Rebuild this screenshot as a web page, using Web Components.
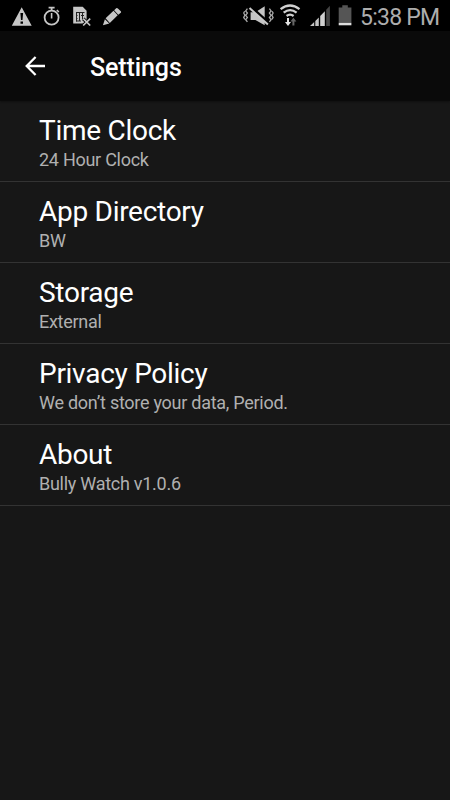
<!DOCTYPE html>
<html lang="en">
<head>
<meta charset="utf-8">
<title>Settings</title>
<style>
  html, body { margin: 0; height: 100%; background: #171717; overflow: hidden; }
  body { font-family: Roboto, "Noto Sans", sans-serif; }
</style>
</head>
<body>
<settings-screen></settings-screen>
<script>
const define = (name, html) => customElements.define(name, class extends HTMLElement {
  constructor() {
    super();
    const t = document.createElement('template');
    t.innerHTML = html;
    this.attachShadow({ mode: 'open' }).append(t.content.cloneNode(true));
  }
});

define('status-bar', `
<style>
  :host { display: flex; justify-content: space-between; height: 31px; background: #000; color: #bdbdbd; }
  div { display: flex; }
  svg { display: block; flex: none; }
  time { font-size: 23px; line-height: 35px; font-weight: 400; letter-spacing: -.75px; margin-right: 10px; white-space: nowrap; width: 80px; color: #adadad; }
</style>
<div>
  <svg width="130" height="31" viewBox="0 0 130 31" fill="#c6c6c6">
    <path fill-rule="evenodd" d="M21.7 7.3 31.7 25.7H11.8ZM20.4 13l.6 7h1.5l.6-7ZM20.5 21.4v2.4h2.5v-2.4Z"/>
    <circle cx="51.6" cy="17.6" r="7" fill="none" stroke="#c6c6c6" stroke-width="1.8"/>
    <path d="M48.6 6.8h6v1.7h-2.1v2h-1.8v-2h-2.1ZM50.8 13h1.6v5.6h-1.6ZM57.4 9.4l2 2-1.1 1.1-2-2Z"/>
    <path d="M73.2 6.7h9.5l3.9 4v12.8H73.2Z"/>
    <path d="M76 12.5h8.5M76.5 12v9.5M76 21h5M79.5 12v9M82.5 12v7M76 15.5h1.5M76 18.5h1.5M81 15.5h3" stroke="#222" stroke-width="1" fill="none"/>
    <path d="m83.2 18.7 7 6.8m0-6.8-7 6.8" stroke="#000" stroke-width="3.4"/>
    <path d="m83.2 18.7 7 6.8m0-6.8-7 6.8" stroke="#c6c6c6" stroke-width="1.7"/>
    <path d="m102.9 25.2 2-6 4.4 4.4ZM105.6 18.3l7.9-7.5 4.2 4.4-7.9 7.7ZM114.1 10.2l2.1-2q.8-.6 1.7.2l2.9 2.9q.7.8 0 1.5l-2.5 2Z"/>
  </svg>
</div>
<div>
  <svg width="117" height="31" viewBox="243 0 117 31" fill="#c4c4c4">
    <path d="M250.6 12.3h4.8l9.3-6v19l-9.3-5.3h-4.8Z"/>
    <path d="m250.4 6.7 18 16.3" stroke="#000" stroke-width="3.2"/>
    <path d="m249.5 8 18.4 16.5" stroke="#c9c9c9" stroke-width="2"/>
    <path d="m247.4 8.7-1.7 2.2 1.7 2.2-1.7 2.2 1.7 2.2-1.7 2.2 1.7 2.2M244.7 11.2l-1 1.8 1.2 2.2-1.2 2.2 1.2 2M269.4 8.7l1.7 2.2-1.7 2.2 1.7 2.2-1.7 2.2 1.7 2.2-1.7 2.2M272.1 11.2l1 1.8-1.2 2.2 1.2 2.2-1.2 2" fill="none" stroke="#aaa" stroke-width="1.3"/>
    <g fill="none" stroke="#d0d0d0" stroke-width="2.3"><path d="M280.6 9.2Q290 1.9 299.5 9.2M283.7 12.7q6.4-5.2 12.9 0M286.6 16q3.4-2.7 7 0"/></g>
    <path d="M287 18h2v4h2l-3 3.9-3-3.9h2Z" fill="#e3e3e3"/>
    <path d="m293.4 17.8 3 3.8h-2v3.9h-2v-3.9h-2Z" fill="#666"/>
    <path d="m310 26 4.2-3.9V26ZM315.3 21l3.5-3.5V26h-3.5Z" fill="#c4c4c4"/>
    <path d="m320.2 16 4.6-4.7V26h-4.6Z" fill="#d0d0d0"/>
    <path d="m326.2 9.8 3.7-4V26h-3.7Z" fill="#444"/>
    <path d="M342.3 5.2h5.5v2.4h3.6v15h-12.7v-15h3.6Z" fill="#555"/>
    <path d="M338.7 22.7h12.7v2.6h-12.7Z" fill="#dedede"/>
  </svg>
  <time>5:38 PM</time>
</div>`);

define('app-bar', `
<style>
  :host { display: flex; align-items: center; height: 70px; background: #0a0a0a; color: #fff;
    box-sizing: border-box; padding: 0 0 0 24px; box-shadow: 0 1px 2px rgba(0,0,0,.35); position: relative; }
  svg { display: block; flex: none; }
  h1 { margin: 3px 0 0 44px; font-size: 25px; font-weight: 500; line-height: 32px; letter-spacing: -.1px; }
</style>
<svg width="22" height="22" viewBox="0 0 22 22" fill="none" stroke="#fff" stroke-width="2.3"><path d="M21 11H3M11.6 2 2.7 11l8.9 9"/></svg>
<h1><slot></slot></h1>`);

define('settings-item', `
<style>
  :host { display: flex; flex-direction: column; height: 81px; box-sizing: border-box; padding: 13px 39px 0; border-bottom: 1px solid #333; }
  .title { font-size: 28px; line-height: 34px; letter-spacing: -.28px; color: #fff; white-space: nowrap; }
  .detail { font-size: 18px; line-height: 24px; letter-spacing: -.27px; color: #b0b0b0; white-space: nowrap; }
</style>
<div class="title"><slot name="title"></slot></div>
<div class="detail"><slot></slot></div>`);

define('settings-screen', `
<style>
  :host { display: flex; flex-direction: column; height: 800px; background: #171717; }
</style>
<status-bar></status-bar>
<app-bar>Settings</app-bar>
<main>
  <settings-item><span slot="title">Time Clock</span>24 Hour Clock</settings-item>
  <settings-item><span slot="title">App Directory</span>BW</settings-item>
  <settings-item><span slot="title">Storage</span>External</settings-item>
  <settings-item><span slot="title">Privacy Policy</span>We don’t store your data, Period.</settings-item>
  <settings-item><span slot="title">About</span>Bully Watch v1.0.6</settings-item>
</main>`);
</script>
</body>
</html>
